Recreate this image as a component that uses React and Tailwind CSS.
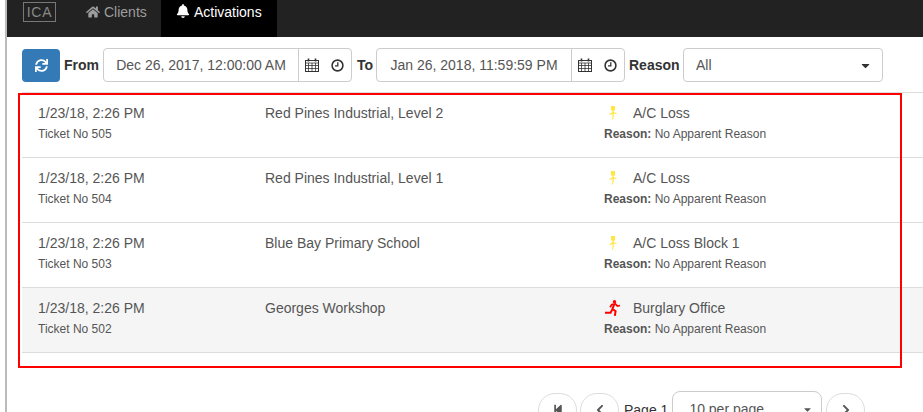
import React from 'react';
import { FaHome, FaBell, FaSync, FaStepBackward, FaChevronLeft, FaChevronRight, FaCaretDown } from 'react-icons/fa';

const rows = [
  { date: '1/23/18, 2:26 PM', ticket: 'Ticket No 505', site: 'Red Pines Industrial, Level 2', alarm: 'A/C Loss', type: 'power' },
  { date: '1/23/18, 2:26 PM', ticket: 'Ticket No 504', site: 'Red Pines Industrial, Level 1', alarm: 'A/C Loss', type: 'power' },
  { date: '1/23/18, 2:26 PM', ticket: 'Ticket No 503', site: 'Blue Bay Primary School', alarm: 'A/C Loss Block 1', type: 'power' },
  { date: '1/23/18, 2:26 PM', ticket: 'Ticket No 502', site: 'Georges Workshop', alarm: 'Burglary Office', type: 'burglary' },
];

function PowerIcon() {
  return (
    <svg width="8" height="14" viewBox="0 0 8 14" className="text-[#ffe640]">
      <path d="M2 0h4v4.5H4.8v1.7L7.5 7v1L4.8 7.6v2.2L4 13.5H3l.6-3.7V8L.5 9V8l3-1.8V4.5H2z" fill="currentColor" />
    </svg>
  );
}

function RunnerIcon() {
  return (
    <svg width="17" height="17" viewBox="0 0 17 17" fill="none" stroke="#f00" strokeWidth="1.7">
      <circle cx="10.5" cy="1.8" r="1.7" fill="#f00" stroke="none" />
      <path d="M16 5.5l-2.6.6-2-2.2-3.6.7L6 7.2" />
      <path d="M10.2 4.5L8.4 9l3.2 2.2-.8 4.6" strokeWidth="2" />
      <path d="M8.2 9.6l-1.6 3.2H1" strokeWidth="2" />
    </svg>
  );
}

function CalendarIcon() {
  return (
    <svg width="14" height="14" viewBox="0 0 14 14" fill="none" stroke="#333" strokeWidth="1">
      <rect x="0.5" y="2.5" width="13" height="11" />
      <path d="M0.5 5h13M0.5 7.5h13M0.5 10.5h13M3.5 5v8.5M7 5v8.5M10.5 5v8.5" strokeWidth="0.8" />
      <path d="M3.5 0.5v3M10.5 0.5v3" strokeWidth="1.6" />
    </svg>
  );
}

function ClockIcon() {
  return (
    <svg width="13" height="13" viewBox="0 0 13 13" fill="none" stroke="#333">
      <circle cx="6.5" cy="6.5" r="5.4" strokeWidth="1.6" />
      <path d="M6.8 3.2v3.6H4" strokeWidth="1.3" />
    </svg>
  );
}

function DateField({ value }) {
  return (
    <div className="flex h-[34px] w-[249px] rounded border border-[#ccc] bg-white">
      <div className="flex w-[195px] items-center justify-center border-r border-[#ccc] text-sm text-[#555]">{value}</div>
      <div className="flex flex-1 items-center gap-[12px] pl-[6px]">
        <CalendarIcon />
        <ClockIcon />
      </div>
    </div>
  );
}

function PagerButton({ children }) {
  return (
    <div className="flex h-[34px] w-[39px] items-center justify-center rounded-[17px] border border-[#ddd] bg-white text-[12px] text-[#555]">
      {children}
    </div>
  );
}

export default function App() {
  return (
    <div className="h-[412px] w-[923px] overflow-hidden bg-white font-['Liberation_Sans',Arial,sans-serif] text-sm text-[#333]">
      <div className="relative ml-[5px] h-full border-l-2 border-[#bbb]">
        <nav className="flex h-[37px] items-stretch bg-[#222]">
          <div className="ml-4 mt-[2px] flex h-[20px] w-[33px] items-center justify-center border border-[#777] text-[14px] tracking-wider text-[#888]">ICA</div>
          <div className="ml-[30px] flex h-[24px] items-center gap-1 text-sm text-[#9d9d9d]">
            <FaHome className="text-[14px]" />
            <span>Clients</span>
          </div>
          <div className="ml-[14px] flex w-[116px] items-start justify-center gap-1 bg-black pt-[4px] text-sm text-white">
            <FaBell className="text-[14px]" />
            <span className="-mt-[2px]">Activations</span>
          </div>
        </nav>

        <div className="flex items-center pl-[15px] pt-[11px]">
          <button className="flex h-[33px] w-[38px] items-center justify-center rounded bg-[#337ab7] text-[13px] text-white">
            <FaSync />
          </button>
          <span className="ml-1 w-[39px] font-bold">From</span>
          <DateField value="Dec 26, 2017, 12:00:00 AM" />
          <span className="ml-[5px] w-[19px] font-bold">To</span>
          <DateField value="Jan 26, 2018, 11:59:59 PM" />
          <span className="ml-1 w-[54px] font-bold">Reason</span>
          <div className="flex h-[34px] w-[200px] items-center justify-between rounded border border-[#ccc] pl-3 pr-[10px] text-[#555]">
            <span>All</span>
            <FaCaretDown className="text-[13px] text-[#333]" />
          </div>
        </div>

        <div className="ml-[15px] mt-[10px] border-t border-[#ddd]">
          {rows.map((row) => (
            <div key={row.ticket} className={`flex h-[65px] border-b border-[#ddd] text-[#555] ${row.type === 'burglary' ? 'bg-[#f5f5f5]' : 'bg-white'}`}>
              <div className="w-[243px] pl-4 pt-[10px]">
                <div className="leading-[20px]">{row.date}</div>
                <div className="mt-[1px] text-xs leading-[20px]">{row.ticket}</div>
              </div>
              <div className="w-[339px] pt-[10px] leading-[20px]">{row.site}</div>
              <div className="pt-[10px]">
                <div className="flex h-5 items-center">
                  <span className="flex w-[29px] justify-center pr-[12px]">
                    {row.type === 'burglary' ? <RunnerIcon /> : <PowerIcon />}
                  </span>
                  <span>{row.alarm}</span>
                </div>
                <div className="mt-[1px] text-xs leading-[20px]"><b>Reason:</b> No Apparent Reason</div>
              </div>
            </div>
          ))}
        </div>

        <div className="mt-10 flex items-center pl-[531px]">
          <PagerButton><FaStepBackward /></PagerButton>
          <div className="ml-[3px]"><PagerButton><FaChevronLeft /></PagerButton></div>
          <span className="ml-[5px] text-[#333]">Page 1</span>
          <div className="-mt-[2px] ml-[4px] flex h-[36px] w-[150px] items-center justify-between rounded-lg border border-[#ccc] pl-4 pr-2 text-[#555]">
            <span>10 per page</span>
            <FaCaretDown className="text-[11px]" />
          </div>
          <div className="ml-[4px]"><PagerButton><FaChevronRight /></PagerButton></div>
        </div>

        {/* red annotation box drawn over the list */}
        <div className="absolute left-[11px] top-[93px] h-[275px] w-[884px] border-2 border-[#f00]" />
      </div>
    </div>
  );
}
